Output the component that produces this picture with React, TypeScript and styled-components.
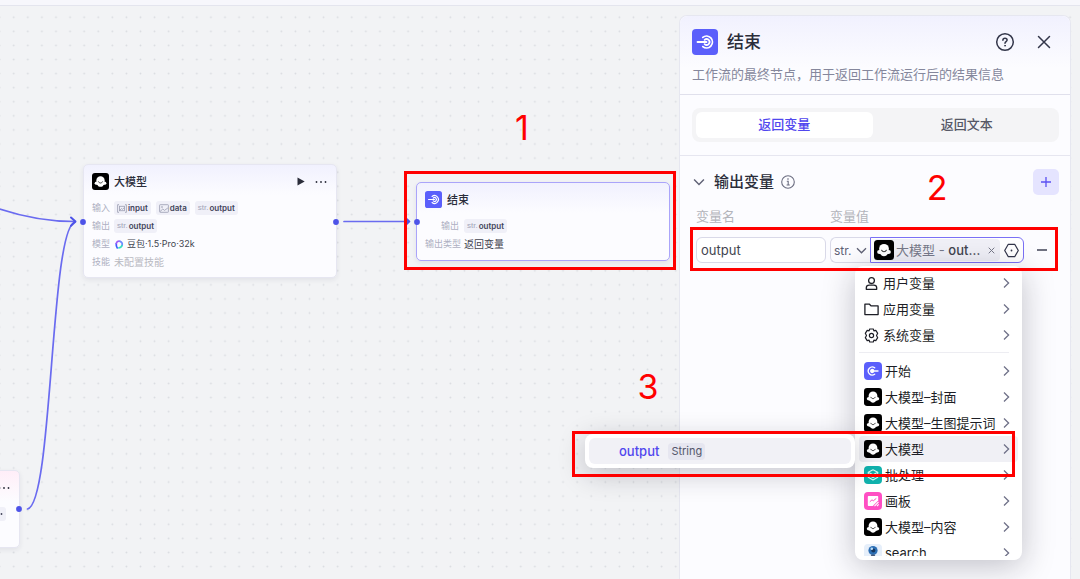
import React from "react";
import styled, { createGlobalStyle, css } from "styled-components";

const GlobalStyle = createGlobalStyle`
  *, *::before, *::after { box-sizing: border-box; }
  body { margin: 0; }
  body, button, input, select {
    font-family: Inter, "Noto Sans CJK SC", sans-serif;
  }
  button { border: 0; padding: 0; margin: 0; background: none; color: inherit; cursor: pointer; }
  h2, h3, p { margin: 0; }
`;

/* ---------- shell ---------- */

const Page = styled.div`
  display: flex;
  flex-direction: column;
  min-height: 100vh;
  overflow: hidden;
  background: #f2f3f5;
  color: #2b2d3a;
`;

const TopBar = styled.header`
  height: 6px;
  background: #f7f7fc;
  border-bottom: 1px solid #e4e5ee;
`;

const Workspace = styled.main`
  position: relative;
  display: flex;
  flex: 1;
  justify-content: flex-end;
  padding: 9px 9px 0 0;
`;

const Canvas = styled.section`
  position: absolute;
  inset: 0;
  overflow: hidden;
`;

const CanvasArt = styled.svg`
  position: absolute;
  inset: 0;
  width: 100%;
  height: 100%;
`;

/* ---------- canvas nodes ---------- */

const Node = styled.article<{ $x: number; $y: number; $h: number; $tint?: string; $selected?: boolean }>`
  position: absolute;
  left: ${(p) => p.$x}px;
  top: ${(p) => p.$y}px;
  width: 254px;
  min-height: ${(p) => p.$h}px;
  padding: 8px 8px 6px;
  border-radius: 5px;
  border: 1px solid ${(p) => (p.$selected ? "#aaa4fa" : "#e6e6f1")};
  background: linear-gradient(${(p) => p.$tint ?? "#f1f1fe"}, #fcfcff 30px);
  box-shadow: 0 2px 5px rgba(40, 40, 80, 0.08);
`;

const NodeHead = styled.div`
  display: flex;
  align-items: center;
  gap: 5px;
  height: 17px;
  margin-bottom: 9px;
`;

const NodeTitle = styled.h3`
  flex: 1;
  font-size: 11px;
  line-height: 16px;
  font-weight: 500;
`;

const NodeActions = styled.div`
  display: flex;
  align-items: center;
  gap: 10px;
  margin-right: 1px;
  color: #2b2d3a;
`;

const IconButton = styled.button`
  display: flex;
  align-items: center;
  justify-content: center;
`;

const NodeRow = styled.div<{ $labelWidth: number }>`
  display: grid;
  grid-template-columns: ${(p) => p.$labelWidth}px 1fr;
  column-gap: 5px;
  align-items: center;
  height: 18px;
`;

const NodeLabel = styled.span`
  font-size: 9px;
  line-height: 14px;
  text-align: right;
  white-space: nowrap;
  color: #aeb0c2;
`;

const NodeValue = styled.span<{ $muted?: boolean; $small?: boolean }>`
  display: flex;
  align-items: center;
  gap: 3px;
  font-size: ${(p) => (p.$small ? 9 : 10)}px;
  line-height: 14px;
  white-space: nowrap;
  color: ${(p) => (p.$muted ? "#babac2" : "#42444f")};
`;

const TagList = styled.div`
  display: flex;
  gap: 5px;
`;

const Tag = styled.span`
  display: flex;
  align-items: center;
  gap: 1px;
  height: 14px;
  padding: 0 3px;
  border-radius: 3px;
  background: #f0f0f8;
  font-size: 8px;
  line-height: 14px;
  font-weight: 600;
  color: #42445a;
`;

const TagType = styled.span`
  font-family: "Liberation Sans", sans-serif;
  font-weight: 400;
  color: #a3a5b8;
`;

/* ---------- panel ---------- */

const Panel = styled.aside`
  position: relative;
  display: flex;
  flex-direction: column;
  width: 392px;
  border: 1px solid #e6e7f0;
  border-bottom: 0;
  border-radius: 8px 8px 0 0;
  background: #fcfcff;
`;

const PanelHead = styled.header`
  padding: 12px 13px 10px 12px;
  border-bottom: 1px solid #e0e0ec;
  border-radius: 8px 8px 0 0;
  background: linear-gradient(#f1f1fe, #fcfcff 52px);
`;

const PanelTitleRow = styled.div`
  display: flex;
  align-items: center;
  gap: 9px;
  height: 27px;
  margin-bottom: 9px;
`;

const PanelTitle = styled.h2`
  flex: 1;
  font-size: 17px;
  line-height: 26px;
  font-weight: 500;
`;

const HeadActions = styled.div`
  display: flex;
  align-items: center;
  gap: 16px;
  color: #33364a;
`;

const PanelText = styled.p`
  font-size: 13px;
  line-height: 20px;
  color: #85879c;
`;

const TabsSection = styled.div`
  padding: 13px 11px 13px 12px;
  border-bottom: 1px solid #e6e6f0;
`;

const Tabs = styled.div`
  display: grid;
  grid-template-columns: 1fr 1fr;
  gap: 6px;
  padding: 4px;
  border-radius: 8px;
  background: #f4f4f6;
`;

const Tab = styled.button<{ $active?: boolean }>`
  height: 26px;
  border-radius: 6px;
  font-size: 13px;
  line-height: 20px;
  padding-bottom: 3px;
  font-weight: 500;
  color: ${(p) => (p.$active ? "#5147ee" : "#565866")};
  background: ${(p) => (p.$active ? "#fff" : "transparent")};
`;

const Section = styled.section`
  padding: 13px 11px 0 13px;
`;

const SectionHead = styled.div`
  display: flex;
  align-items: center;
  height: 26px;
`;

const SectionToggle = styled.button`
  display: flex;
  align-items: center;
  gap: 9px;
  font-size: 15px;
  line-height: 24px;
  font-weight: 500;
`;

const InfoMark = styled.span`
  display: flex;
  flex: 1;
  margin-left: 7px;
  color: #6b6d80;
`;

const AddButton = styled(IconButton)`
  width: 26px;
  height: 26px;
  border-radius: 5px;
  background: #e5e4ff;
  color: #5b50f2;
`;

const FieldGrid = styled.div`
  position: relative;
  display: grid;
  grid-template-columns: 130px 1fr 31px;
  column-gap: 4px;
  row-gap: 11px;
  margin-top: 11px;
  padding-left: 3px;
`;

const FieldLabel = styled.label`
  font-size: 13px;
  line-height: 20px;
  color: #b3b4bb;
`;

const NameInput = styled.input`
  width: 100%;
  height: 26px;
  padding: 0 4px;
  border: 1px solid #d9d9e8;
  border-radius: 6px;
  outline: 0;
  background: #fff;
  font-size: 13px;
  color: #42444f;
`;

const ValueField = styled.div`
  position: relative;
  display: flex;
  height: 26px;
`;

const TypeBox = styled.div`
  position: relative;
  display: flex;
  align-items: center;
  width: 40px;
  border: 1px solid #d9d9e8;
  border-right: 0;
  border-radius: 6px 0 0 6px;
  svg { position: absolute; right: 3px; pointer-events: none; }
`;

const TypeSelect = styled.select`
  appearance: none;
  width: 100%;
  height: 24px;
  padding: 0 0 0 3px;
  border: 0;
  outline: 0;
  background: transparent;
  font-size: 12px;
  color: #5f6175;
`;

const ReferenceBox = styled.div`
  display: flex;
  flex: 1;
  align-items: center;
  gap: 4px;
  min-width: 0;
  padding: 0 4px 0 3px;
  border: 1px solid #7a70f5;
  border-radius: 0 6px 6px 0;
  background: #fff;
`;

const ReferenceTag = styled.span`
  display: flex;
  flex: 1;
  align-items: center;
  height: 22px;
  min-width: 0;
  padding-right: 5px;
  border-radius: 4px;
  background: #f0f0f7;
  font-size: 13px;
  line-height: 20px;
  color: #777989;
`;

const ReferenceText = styled.span`
  flex: 1;
  margin-left: 2px;
  white-space: nowrap;
  strong { font-weight: 500; color: #42444f; }
`;

const RemoveButton = styled(IconButton)`
  width: 27px;
`;

/* ---------- drop-down ---------- */

const Popover = styled.div`
  position: absolute;
  z-index: 2;
  top: 29px;
  right: 2px;
  width: 167px;
  padding: 4px;
  border-radius: 8px;
  background: #fff;
  box-shadow: 0 6px 32px rgba(20, 20, 40, 0.26);
`;

const MenuScroll = styled.div`
  height: 286px;
  overflow: hidden;
`;

const MenuItem = styled.button<{ $active?: boolean; $plain?: boolean }>`
  display: flex;
  align-items: center;
  gap: ${(p) => (p.$plain ? 4 : 3)}px;
  width: 100%;
  height: 26px;
  padding: 0 8px 0 5px;
  border-radius: 4px;
  font-size: 13px;
  line-height: 20px;
  text-align: left;
  white-space: nowrap;
  color: #1d1e26;
  ${(p) => p.$active && css`background: #f0f0f5;`}
`;

const ItemText = styled.span`
  flex: 1;
  min-width: 0;
`;

const Divider = styled.hr`
  height: 1px;
  margin: 4px 9px 5px 0;
  border: 0;
  background: #ededf2;
`;

const Submenu = styled.div`
  position: absolute;
  top: 168px;
  right: 167px;
  width: 270px;
  padding: 4px;
  border-radius: 8px;
  background: #fff;
  box-shadow: 0 6px 28px rgba(20, 20, 40, 0.24);
`;

const SubmenuItem = styled.button`
  display: flex;
  align-items: center;
  gap: 9px;
  width: 100%;
  height: 26px;
  padding-left: 30px;
  border-radius: 6px;
  background: #f1f1f6;
  font-size: 13px;
  font-weight: 500;
  color: #5147ee;
`;

const TypeBadge = styled.span`
  height: 17px;
  padding: 0 3px;
  border-radius: 4px;
  background: #e6e6f0;
  font-size: 11px;
  line-height: 17px;
  font-weight: 400;
  color: #54566a;
`;

/* ---------- annotations ---------- */

const Highlight = styled.div<{ $x: number; $y: number; $w: number; $h: number }>`
  position: absolute;
  z-index: 3;
  left: ${(p) => p.$x}px;
  top: ${(p) => p.$y}px;
  width: ${(p) => p.$w}px;
  height: ${(p) => p.$h}px;
  border: 3px solid #ff0000;
  pointer-events: none;
`;

const StepNumber = styled.span<{ $x: number; $y: number }>`
  position: absolute;
  z-index: 3;
  left: ${(p) => p.$x}px;
  top: ${(p) => p.$y}px;
  width: 24px;
  text-align: center;
  font-size: 34px;
  line-height: 40px;
  color: #ff0000;
  pointer-events: none;
`;

/* ---------- icons ---------- */

type IconProps = { size: number };

const ModelIcon = ({ size }: IconProps) => (
  <svg width={size} height={size} viewBox="0 0 20 20" aria-hidden="true">
    <rect width="20" height="20" rx="3.500" fill="#000" />
    <g fill="#fff">
      <circle cx="10" cy="8.800" r="4.900" />
      <ellipse cx="5.400" cy="12" rx="2.300" ry="1.900" />
      <ellipse cx="14.600" cy="12" rx="2.300" ry="1.900" />
      <path d="M5.500 10.500h9v2.800c0 .6-.5 1-1.200 1-.4 1.300-1.700 2-3.300 2s-2.900-.7-3.300-2c-.7 0-1.200-.4-1.200-1z" />
    </g>
    <path d="M7.700 10.300c.5 1 1.300 1.500 2.300 1.500s1.800-.5 2.300-1.500" stroke="#333" strokeWidth="1.100" fill="none" strokeLinecap="round" />
  </svg>
);

const EndIcon = ({ size }: IconProps) => (
  <svg width={size} height={size} viewBox="0 0 26 26" fill="none" stroke="#fff" strokeWidth="1.800" strokeLinecap="round" aria-hidden="true">
    <rect width="26" height="26" rx="4" fill="#5b5ffb" stroke="none" />
    <path d="M5.500 13h9" />
    <path d="M10.800 8.400a5.900 5.900 0 1 1 0 9.200" />
    <path d="M12.600 10.900a2.900 2.900 0 1 1 0 4.200" />
  </svg>
);

const StartIcon = ({ size }: IconProps) => (
  <svg width={size} height={size} viewBox="0 0 18 18" fill="none" stroke="#fff" strokeWidth="1.300" strokeLinecap="round" aria-hidden="true">
    <rect width="18" height="18" rx="4" fill="#5b5ffb" stroke="none" />
    <path d="M8.500 9h5.500" />
    <path d="M10.700 5.800a4 4 0 1 0 0 6.400" />
    <circle cx="8.200" cy="9" r="1.500" fill="#fff" />
  </svg>
);

const BatchIcon = () => (
  <svg width="18" height="18" viewBox="0 0 18 18" fill="none" stroke="#d4fbf6" strokeWidth="1.100" strokeLinejoin="round" aria-hidden="true">
    <rect width="18" height="18" rx="4" fill="#10b2ad" stroke="none" />
    <path d="M9 3.800 13.700 6.300 9 8.800 4.300 6.300z" />
    <path d="M4.300 6.300v5L9 13.900l4.700-2.600v-5M4.300 8.900 9 11.400l4.700-2.500" />
  </svg>
);

const BoardIcon = () => (
  <svg width="18" height="18" viewBox="0 0 18 18" aria-hidden="true">
    <rect width="18" height="18" rx="4" fill="#ff4fc3" />
    <path d="M4.800 4h8.400c.6 0 1 .4 1 1v3.600L8.800 14h-4c-.6 0-1-.4-1-1V5c0-.6.4-1 1-1z" fill="#fff" />
    <path d="M5.800 9.800 8 7.800l1.300 1 3-2.400" stroke="#ff4fc3" strokeWidth="1" fill="none" />
    <path d="M10.500 14.200l4-4.200M13 14.200l1.700-1.800" stroke="#fff" strokeWidth="1.100" />
  </svg>
);

const SearchIcon = () => (
  <svg width="18" height="18" viewBox="0 0 18 18" aria-hidden="true">
    <rect width="18" height="18" rx="4" fill="#e6effa" />
    <circle cx="9" cy="6.500" r="4.600" fill="#2c6fb5" />
    <circle cx="9.300" cy="6.600" r="2" fill="#16355e" />
    <circle cx="7.800" cy="4.800" r="1.300" fill="#b9dcf7" />
    <path d="M6.500 12.500h5l-1-2h-3z" fill="#44597a" />
  </svg>
);

const UserIcon = () => (
  <svg width="15" height="15" viewBox="0 0 15 15" fill="none" stroke="#1d1e26" strokeWidth="1.300" aria-hidden="true">
    <circle cx="7.500" cy="4.600" r="2.900" />
    <path d="M2.300 13.300v-1.500c0-1.700 1.300-2.700 2.900-2.700h4.600c1.600 0 2.900 1 2.900 2.700v1.500z" strokeLinejoin="round" />
  </svg>
);

const FolderIcon = () => (
  <svg width="15" height="15" viewBox="0 0 15 15" fill="none" stroke="#1d1e26" strokeWidth="1.300" strokeLinejoin="round" aria-hidden="true">
    <path d="M.9 12.600V2.200h4.600l1.500 1.700h7.100v8.700z" />
  </svg>
);

const GearIcon = () => (
  <svg width="15" height="15" viewBox="0 0 15 15" fill="none" stroke="#1d1e26" strokeWidth="1.200" strokeLinejoin="round" aria-hidden="true">
    <path d="M5.700 1h3.600l.6 1.800 1.900-.4 1.900 2.900L12.500 7.500l1.200 2.200-1.900 2.900-1.900-.4-.6 1.800H5.700l-.6-1.800-1.900.4-1.900-2.900 1.200-2.200-1.200-2.200 1.900-2.900 1.900.4z" />
    <circle cx="7.500" cy="7.500" r="2.100" />
  </svg>
);

const ChevronRight = () => (
  <svg width="7" height="12" viewBox="0 0 7 12" fill="none" stroke="#6f7188" strokeWidth="1.300" aria-hidden="true">
    <path d="M1 1.500 5.600 6 1 10.500" />
  </svg>
);

const ChevronDown = ({ size }: IconProps) => (
  <svg width={size} height={size} viewBox="0 0 11 11" fill="none" stroke="#5f6175" strokeWidth="1.300" aria-hidden="true">
    <path d="M1 3.300 5.500 7.800 10 3.300" />
  </svg>
);

const DotsIcon = () => (
  <svg width="12" height="4" viewBox="0 0 12 4" fill="currentColor" aria-hidden="true">
    <circle cx="1.500" cy="2" r="0.900" />
    <circle cx="6" cy="2" r="0.900" />
    <circle cx="10.500" cy="2" r="0.900" />
  </svg>
);

const ImageIcon = ({ framed }: { framed?: boolean }) => (
  <svg width="10" height="9" viewBox="0 0 10 9" fill="none" stroke="#a3a5b8" strokeWidth="0.900" aria-hidden="true">
    {framed ? (
      <>
        <path d="M2 .7H.6v7.600H2M8 .7h1.400v7.600H8" />
        <rect x="2.500" y="2.300" width="5" height="4.400" />
        <path d="M2.800 6.300 4.500 4.500l1 .8 1.700-1.600" />
      </>
    ) : (
      <>
        <rect x=".6" y=".7" width="8.800" height="7.600" rx=".6" />
        <path d="M1 7.600 3.800 5l1.700 1.400L8.800 4" />
        <circle cx="3" cy="3" r=".5" />
      </>
    )}
  </svg>
);

const DoubaoIcon = () => (
  <svg width="10" height="11" viewBox="0 0 11 11" fill="none" strokeWidth="1.900" strokeLinecap="round" aria-hidden="true">
    <path d="M3.600 9.300C2.700 8.200 2.300 6.500 2.500 4.600" stroke="#3b5bff" />
    <path d="M2.600 4.200C3 2.200 4.600 1.500 6.300 1.900" stroke="#a15bf5" />
    <path d="M6.500 2C8.700 2.600 9.600 4.600 8.800 6.600" stroke="#6d8cff" />
    <path d="M8.700 6.800C8 8.600 6.700 9.200 5.400 9.200" stroke="#37e0c0" />
  </svg>
);

/* ---------- data ---------- */

const scopes = [
  { label: "用户变量", icon: <UserIcon /> },
  { label: "应用变量", icon: <FolderIcon /> },
  { label: "系统变量", icon: <GearIcon /> },
];

const sources = [
  { label: "开始", icon: <StartIcon size={18} /> },
  { label: "大模型–封面", icon: <ModelIcon size={18} /> },
  { label: "大模型–生图提示词", icon: <ModelIcon size={18} /> },
  { label: "大模型", icon: <ModelIcon size={18} />, active: true },
  { label: "批处理", icon: <BatchIcon /> },
  { label: "画板", icon: <BoardIcon /> },
  { label: "大模型–内容", icon: <ModelIcon size={18} /> },
  { label: "search", icon: <SearchIcon /> },
];

const ports = [
  [83, 216],
  [336, 216],
  [417, 216],
  [19, 503],
];

const StringTag = () => (
  <Tag>
    <TagType>str.</TagType>output
  </Tag>
);

function FlowCanvas() {
  return (
    <Canvas aria-label="工作流画布">
      <CanvasArt aria-hidden="true">
        <defs>
          <pattern id="grid" x="6.700" y="4.200" width="14.085" height="14.085" patternUnits="userSpaceOnUse">
            <circle cx="7.040" cy="7.040" r="0.900" fill="#d9dbe0" />
          </pattern>
        </defs>
        <rect width="100%" height="100%" fill="url(#grid)" />
      </CanvasArt>

      <Node $x={83} $y={158} $h={114}>
        <NodeHead>
          <ModelIcon size={17} />
          <NodeTitle>大模型</NodeTitle>
          <NodeActions>
            <IconButton aria-label="运行">
              <svg width="8" height="9" viewBox="0 0 8 9" fill="currentColor">
                <path d="M.5.5 7.700 4.500.5 8.500z" />
              </svg>
            </IconButton>
            <IconButton aria-label="更多">
              <DotsIcon />
            </IconButton>
          </NodeActions>
        </NodeHead>
        <NodeRow $labelWidth={17}>
          <NodeLabel>输入</NodeLabel>
          <TagList>
            <Tag><ImageIcon framed />input</Tag>
            <Tag><ImageIcon />data</Tag>
            <StringTag />
          </TagList>
        </NodeRow>
        <NodeRow $labelWidth={17}>
          <NodeLabel>输出</NodeLabel>
          <TagList><StringTag /></TagList>
        </NodeRow>
        <NodeRow $labelWidth={17}>
          <NodeLabel>模型</NodeLabel>
          <NodeValue $small><DoubaoIcon />豆包·1.5·Pro·32k</NodeValue>
        </NodeRow>
        <NodeRow $labelWidth={17}>
          <NodeLabel>技能</NodeLabel>
          <NodeValue $muted>未配置技能</NodeValue>
        </NodeRow>
      </Node>

      <Node $x={416} $y={176} $h={79} $selected>
        <NodeHead>
          <EndIcon size={17} />
          <NodeTitle>结束</NodeTitle>
        </NodeHead>
        <NodeRow $labelWidth={34}>
          <NodeLabel>输出</NodeLabel>
          <TagList><StringTag /></TagList>
        </NodeRow>
        <NodeRow $labelWidth={34}>
          <NodeLabel>输出类型</NodeLabel>
          <NodeValue>返回变量</NodeValue>
        </NodeRow>
      </Node>

      <Node $x={-234} $y={464} $h={78} $tint="#ffeef8">
        <NodeHead>
          <NodeTitle />
          <NodeActions>
            <IconButton aria-label="更多"><DotsIcon /></IconButton>
          </NodeActions>
        </NodeHead>
        <NodeRow $labelWidth={208}>
          <span />
          <TagList><Tag><DotsIcon /></Tag></TagList>
        </NodeRow>
      </Node>

      <CanvasArt fill="none" stroke="#6a6bf0" strokeWidth="1.700" strokeLinecap="round" aria-hidden="true">
        <path d="M-2 202.400C22 210.500 48 215.500 75 215.500" />
        <path d="M27.500 503C53 498 50 222 75 216" />
        <path d="M71 211.500 75.500 215.600 71 219.800" stroke="#4d53e8" strokeWidth="2" strokeLinejoin="round" />
        <path d="M344 215.500H406" />
        <path d="M407 213 409.500 215.500 407 218z" fill="#4d53e8" stroke="#4d53e8" strokeLinejoin="round" />
        {ports.map(([x, y]) => (
          <circle key={`${x}-${y}`} cx={x} cy={y} r="2.900" fill="#4d53e8" stroke="none" />
        ))}
      </CanvasArt>

      <Highlight $x={404} $y={165} $w={272} $h={99} />
      <StepNumber $x={510} $y={102}>1</StepNumber>
    </Canvas>
  );
}

function VariablePicker() {
  return (
    <Popover>
      <MenuScroll role="menu">
        {scopes.map((s) => (
          <MenuItem key={s.label} role="menuitem" $plain>
            {s.icon}
            <ItemText>{s.label}</ItemText>
            <ChevronRight />
          </MenuItem>
        ))}
        <Divider />
        {sources.map((s) => (
          <MenuItem key={s.label} role="menuitem" $active={s.active}>
            {s.icon}
            <ItemText>{s.label}</ItemText>
            <ChevronRight />
          </MenuItem>
        ))}
      </MenuScroll>
      <Submenu role="menu">
        <SubmenuItem role="menuitem">
          output <TypeBadge>String</TypeBadge>
        </SubmenuItem>
      </Submenu>
      <StepNumber $x={-219} $y={101}>3</StepNumber>
      <Highlight $x={-283} $y={165} $w={443} $h={46} />
    </Popover>
  );
}

function EndPanel() {
  return (
    <Panel>
      <PanelHead>
        <PanelTitleRow>
          <EndIcon size={26} />
          <PanelTitle>结束</PanelTitle>
          <HeadActions>
            <IconButton aria-label="帮助">
              <svg width="20" height="20" viewBox="0 0 20 20" fill="none" stroke="currentColor" strokeWidth="1.500" strokeLinecap="round">
                <circle cx="10" cy="10" r="8.300" />
                <path d="M7.900 8.200c0-1.200.9-2 2.100-2s2.100.8 2.100 1.900c0 1.500-2.100 1.600-2.100 3.200" />
                <circle cx="10" cy="13.700" r=".5" fill="currentColor" strokeWidth=".8" />
              </svg>
            </IconButton>
            <IconButton aria-label="关闭">
              <svg width="26" height="20" viewBox="0 0 26 20" fill="none" stroke="currentColor" strokeWidth="1.500" strokeLinecap="round">
                <path d="M7.500 4.500 18.500 15.500M18.500 4.500 7.500 15.500" />
              </svg>
            </IconButton>
          </HeadActions>
        </PanelTitleRow>
        <PanelText>工作流的最终节点，用于返回工作流运行后的结果信息</PanelText>
      </PanelHead>

      <TabsSection>
        <Tabs role="tablist">
          <Tab role="tab" aria-selected="true" $active>返回变量</Tab>
          <Tab role="tab" aria-selected="false">返回文本</Tab>
        </Tabs>
      </TabsSection>

      <Section>
        <SectionHead>
          <SectionToggle>
            <ChevronDown size={12} />
            输出变量
          </SectionToggle>
          <InfoMark>
            <svg width="14" height="14" viewBox="0 0 14 14" fill="none" stroke="currentColor" strokeWidth="1.100" aria-hidden="true">
              <circle cx="7" cy="7" r="6.300" />
              <path d="M5.800 6.200H7.200V10M5.600 10h3.200" />
              <circle cx="7" cy="4" r=".4" fill="currentColor" strokeWidth=".8" />
            </svg>
          </InfoMark>
          <AddButton aria-label="添加变量">
            <svg width="12" height="12" viewBox="0 0 12 12" stroke="currentColor" strokeWidth="1.300">
              <path d="M6 1v10M1 6h10" />
            </svg>
          </AddButton>
        </SectionHead>

        <FieldGrid>
          <FieldLabel htmlFor="var-name">变量名</FieldLabel>
          <FieldLabel htmlFor="var-type">变量值</FieldLabel>
          <span />
          <NameInput id="var-name" defaultValue="output" />
          <ValueField>
            <TypeBox>
              <TypeSelect id="var-type" defaultValue="str">
                <option value="str">str.</option>
              </TypeSelect>
              <ChevronDown size={11} />
            </TypeBox>
            <ReferenceBox>
              <ReferenceTag>
                <ModelIcon size={20} />
                <ReferenceText>大模型 - <strong>out…</strong></ReferenceText>
                <IconButton aria-label="清除">
                  <svg width="7" height="7" viewBox="0 0 7 7" stroke="#777989" strokeWidth="1">
                    <path d="M.7.7 6.300 6.300M6.300.7.7 6.300" />
                  </svg>
                </IconButton>
              </ReferenceTag>
              <IconButton aria-label="选择变量">
                <svg width="15" height="15" viewBox="0 0 15 15" fill="none" stroke="#33364a" strokeWidth="1.200" strokeLinejoin="round">
                  <path d="M4.300 1.300h6.400L14.300 7.500l-3.600 6.200H4.300L.7 7.500z" />
                  <circle cx="7.500" cy="7.500" r=".9" fill="#33364a" stroke="none" />
                </svg>
              </IconButton>
            </ReferenceBox>
            <VariablePicker />
          </ValueField>
          <RemoveButton aria-label="删除变量">
            <svg width="12" height="12" viewBox="0 0 12 12" stroke="#33364a" strokeWidth="1.400">
              <path d="M1 6h10" />
            </svg>
          </RemoveButton>
          <Highlight $x={-3} $y={21} $w={368} $h={44} />
        </FieldGrid>
        <StepNumber $x={245} $y={152}>2</StepNumber>
      </Section>
    </Panel>
  );
}

export default function App() {
  return (
    <>
      <GlobalStyle />
      <Page>
        <TopBar />
        <Workspace>
          <FlowCanvas />
          <EndPanel />
        </Workspace>
      </Page>
    </>
  );
}
